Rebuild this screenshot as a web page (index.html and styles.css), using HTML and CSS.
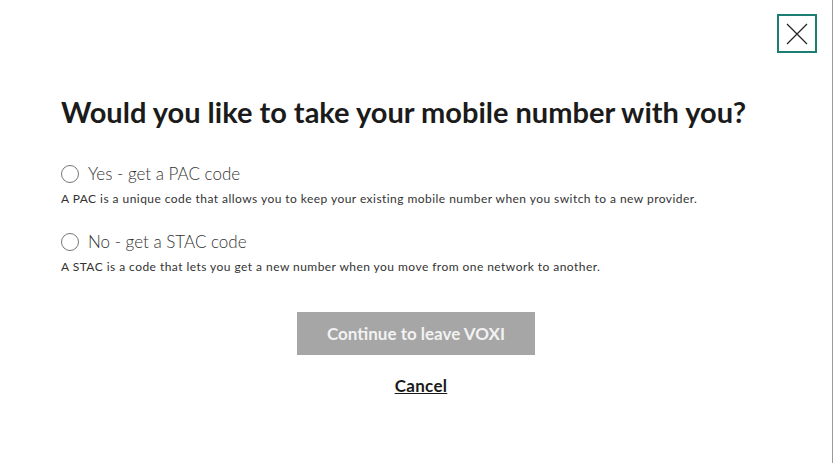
FILE: index.html
```html
<!DOCTYPE html>
<html lang="en">
<head>
    <meta charset="UTF-8">
    <meta name="viewport" content="width=device-width, initial-scale=1.0">
    <title>Leave VOXI</title>
    <link rel="stylesheet" href="styles.css">
</head>
<body>
    <div class="modal">
        <div class="modal-top">
            <button class="close-btn" aria-label="Close">
                <svg width="22" height="22" viewBox="0 0 22 22">
                    <path d="M1 1 L21 21 M21 1 L1 21" stroke="#222" stroke-width="1.2" fill="none"/>
                </svg>
            </button>
        </div>

        <h1>Would you like to take your mobile number with you?</h1>

        <div class="option">
            <label class="option-label">
                <span class="radio"></span>
                Yes - get a PAC code
            </label>
            <p class="option-desc">A PAC is a unique code that allows you to keep your existing mobile number when you switch to a new provider.</p>
        </div>

        <div class="option">
            <label class="option-label">
                <span class="radio"></span>
                No - get a STAC code
            </label>
            <p class="option-desc">A STAC is a code that lets you get a new number when you move from one network to another.</p>
        </div>

        <div class="actions">
            <button class="continue-btn" disabled>Continue to leave VOXI</button>
            <a href="#" class="cancel-link">Cancel</a>
        </div>
    </div>
</body>
</html>
```

FILE: styles.css
```css
html, body {
    margin: 0;
    padding: 0;
    height: 100%;
}
body {
    font-family: Lato, "Liberation Sans", sans-serif;
    background: #fff;
    color: #222;
    border-right: 1px solid #9a9a9a;
    box-sizing: border-box;
}
.modal {
    padding: 14px 15px 0 61px;
}
.modal-top {
    display: flex;
    justify-content: flex-end;
}
.close-btn {
    width: 40px;
    height: 39px;
    border: 2px solid #1c7d72;
    background: #fff;
    padding: 0;
    display: flex;
    align-items: center;
    justify-content: center;
    cursor: pointer;
}
h1 {
    margin: 42px 0 34px;
    font-size: 29px;
    font-weight: 700;
    color: #1b1b1b;
    line-height: 34px;
}
.option {
    margin-bottom: 24px;
}
.option-label {
    display: flex;
    align-items: center;
    gap: 9px;
    font-size: 17px;
    font-weight: 300;
    color: #333;
    line-height: 22px;
    cursor: pointer;
}
.radio {
    width: 16px;
    height: 16px;
    border: 1.5px solid #777;
    border-radius: 50%;
}
.option-desc {
    margin: 6px 0 0;
    font-size: 12px;
    letter-spacing: 0.45px;
    color: #333;
    line-height: 16px;
}
.actions {
    display: flex;
    flex-direction: column;
    align-items: center;
    margin-top: 37px;
    padding-right: 46px;
}
.continue-btn {
    width: 238px;
    height: 43px;
    background: #a6a6a6;
    color: #f2f2f2;
    border: none;
    font-family: inherit;
    font-size: 17px;
    font-weight: 700;
}
.cancel-link {
    margin: 20px 0 0 10px;
    font-size: 17px;
    letter-spacing: 0.3px;
    font-weight: 700;
    color: #1b1b1b;
    text-decoration: underline;
}
```
